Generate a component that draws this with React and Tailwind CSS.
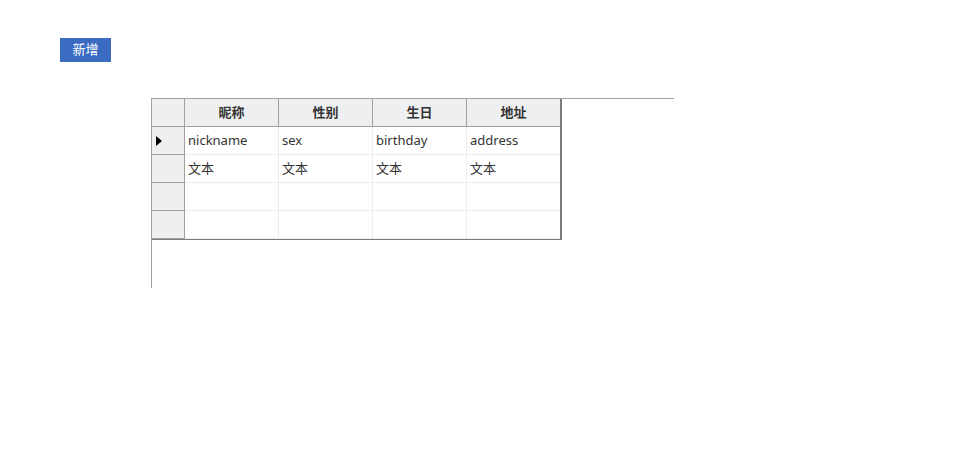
const columns = ['昵称', '性别', '生日', '地址'];

const rows = [
    ['nickname', 'sex', 'birthday', 'address'],
    ['文本', '文本', '文本', '文本'],
    ['', '', '', ''],
    ['', '', '', ''],
];

export default function App() {
    return (
        <div className="w-[960px] h-[450px] bg-white font-['Noto_Sans','Noto_Sans_CJK_SC',sans-serif] text-[13px] text-[#333]">
            <div className="pt-[38px] pl-[60px]">
                <button className="w-[51px] h-[24px] bg-[#3b6cc2] text-white text-[13px] flex items-center justify-center">
                    新增
                </button>
            </div>
            <div className="pl-[151px] pt-[36px]">
                <div className="w-[523px] h-[190px] border-t border-l border-[#a0a0a0]">
                    <div className="w-[410px] border-r-2 border-b border-[#7c7c7c] grid grid-cols-[33px_94px_94px_94px_93px]">
                        <div className="h-[28px] bg-[#efefef] border-r border-b border-[#a0a0a0]" />
                        {columns.map((c, i) => (
                            <div
                                key={c}
                                className={`h-[28px] bg-[#eeeff0] border-b border-[#a0a0a0] flex items-center justify-center font-bold text-[#333] ${i < 3 ? 'border-r' : ''}`}
                            >
                                {c}
                            </div>
                        ))}
                        {rows.map((r, ri) => (
                            <div key={ri} className="contents">
                                <div className="h-[28px] bg-[#efefef] border-r border-b border-[#a0a0a0] flex items-center pl-[4px]">
                                    {ri === 0 && (
                                        <svg width="6" height="10" viewBox="0 0 6 10">
                                            <path d="M0 0 L6 5 L0 10 Z" fill="#000" />
                                        </svg>
                                    )}
                                </div>
                                {r.map((v, ci) => (
                                    <div
                                        key={ci}
                                        className={`h-[28px] bg-white border-b border-[#ececec] flex items-center pl-[3px] ${ci < 3 ? 'border-r' : ''}`}
                                    >
                                        {v}
                                    </div>
                                ))}
                            </div>
                        ))}
                    </div>
                </div>
            </div>
        </div>
    );
}
